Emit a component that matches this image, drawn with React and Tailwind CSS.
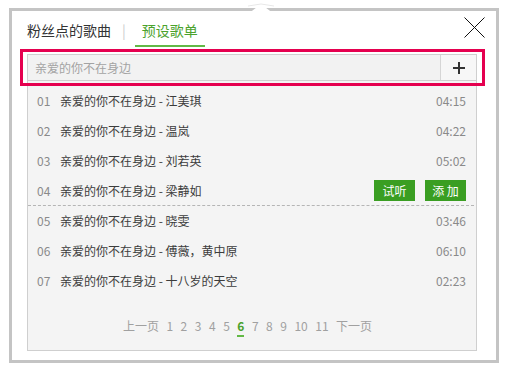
const songs = [
  { no: '01', title: '亲爱的你不在身边 - 江美琪', time: '04:15' },
  { no: '02', title: '亲爱的你不在身边 - 温岚', time: '04:22' },
  { no: '03', title: '亲爱的你不在身边 - 刘若英', time: '05:02' },
  { no: '04', title: '亲爱的你不在身边 - 梁静如', time: '03:58', active: true },
  { no: '05', title: '亲爱的你不在身边 - 晓雯', time: '03:46' },
  { no: '06', title: '亲爱的你不在身边 - 傅薇，黄中原', time: '06:10' },
  { no: '07', title: '亲爱的你不在身边 - 十八岁的天空', time: '02:23' },
]

const pages = ['1', '2', '3', '4', '5', '6', '7', '8', '9', '10', '11']

export default function App() {
  return (
    <div
      className="relative w-[508px] h-[372px] bg-white overflow-hidden"
      style={{ fontFamily: '"Noto Sans CJK SC", "Noto Sans", sans-serif' }}
    >
      <div className="relative ml-[9px] mt-[8px] w-[490px] h-[355px] border-[3px] border-[#c4c4c4] bg-white pl-[15px] pr-[19px]">
        {/* pointer notch */}
        <svg className="absolute -top-[8px] left-[236px]" width="26" height="11" viewBox="0 0 26 11">
          <polygon points="0,11 13,1 26,11" fill="#fff" />
          <polyline points="0,3 13,1 26,3" fill="none" stroke="#e8e8e8" strokeWidth="1" />
        </svg>

        {/* tabs */}
        <div className="flex items-start justify-between h-[36px]">
          <div className="flex items-start h-full text-[14px] leading-[20px]">
            <span className="pt-[9px] text-[#333]">粉丝点的歌曲</span>
            <span className="pt-[9px] ml-[11px] text-[#ccc]">|</span>
            <span className="ml-[9px] h-full px-[7px] pt-[9px] text-[#4ba22c] border-b-[2px] border-[#63b946]">预设歌单</span>
          </div>
          <svg className="mt-[6px] -mr-[8px]" width="21" height="21" viewBox="0 0 21 21">
            <path d="M0.5 0.5 L20.5 20.5 M20.5 0.5 L0.5 20.5" stroke="#111" strokeWidth="1" />
          </svg>
        </div>

        {/* search */}
        <div className="relative mt-[7px]">
          <div className="flex h-[27px] border border-[#cfcfcf] bg-[#f2f2f2]">
            <div className="flex-1 pl-[7px] text-[12px] leading-[25px] text-[#a3a3a3]">亲爱的你不在身边</div>
            <div className="w-[36px] border-l border-[#d6d6d6] bg-[#f7f7f7] flex items-center justify-center">
              <svg width="12" height="12" viewBox="0 0 12 12">
                <path d="M6 0 V12 M0 6 H12" stroke="#333" strokeWidth="2" />
              </svg>
            </div>
          </div>
          <div className="absolute -left-[7px] -top-[5px] w-[465px] h-[37px] border-[3px] border-[#e5004f]" />
        </div>

        {/* list */}
        <div className="flex flex-col h-[270px] border border-t-0 border-[#cfcfcf] bg-[#f4f4f4] pt-[5px]">
          {songs.map((s) => (
            <div
              key={s.no}
              className={`flex items-center h-[30px] shrink-0 text-[12px] ${
                s.active ? 'border-b border-dashed border-[#b5b5b5] mr-[2px] pr-[8px]' : 'pr-[10px]'
              } pl-[9px]`}
            >
              <span className="w-[23px] text-[#8a8a8a]">{s.no}</span>
              <span className="flex-1 text-[#3c3c3c]">{s.title}</span>
              {s.active ? (
                <div className="flex gap-[10px]">
                  <span className="w-[41px] h-[21px] bg-[#3a9e22] text-white leading-[21px] text-center">试听</span>
                  <span className="w-[41px] h-[21px] bg-[#3a9e22] text-white leading-[21px] text-center">添 加</span>
                </div>
              ) : (
                <span className="text-[#8a8a8a]">{s.time}</span>
              )}
            </div>
          ))}

          <div className="flex justify-center items-start gap-[7.5px] mt-[20px] pr-[9px] text-[12px] leading-[20px] text-[#a0a0a0]">
            <span>上一页</span>
            {pages.map((p) =>
              p === '6' ? (
                <span key={p} className="text-[#4ba22c] font-bold border-b-[2px] border-[#63b946] leading-[18px] pt-[1px]">
                  {p}
                </span>
              ) : (
                <span key={p}>{p}</span>
              )
            )}
            <span>下一页</span>
          </div>
        </div>
      </div>
    </div>
  )
}
